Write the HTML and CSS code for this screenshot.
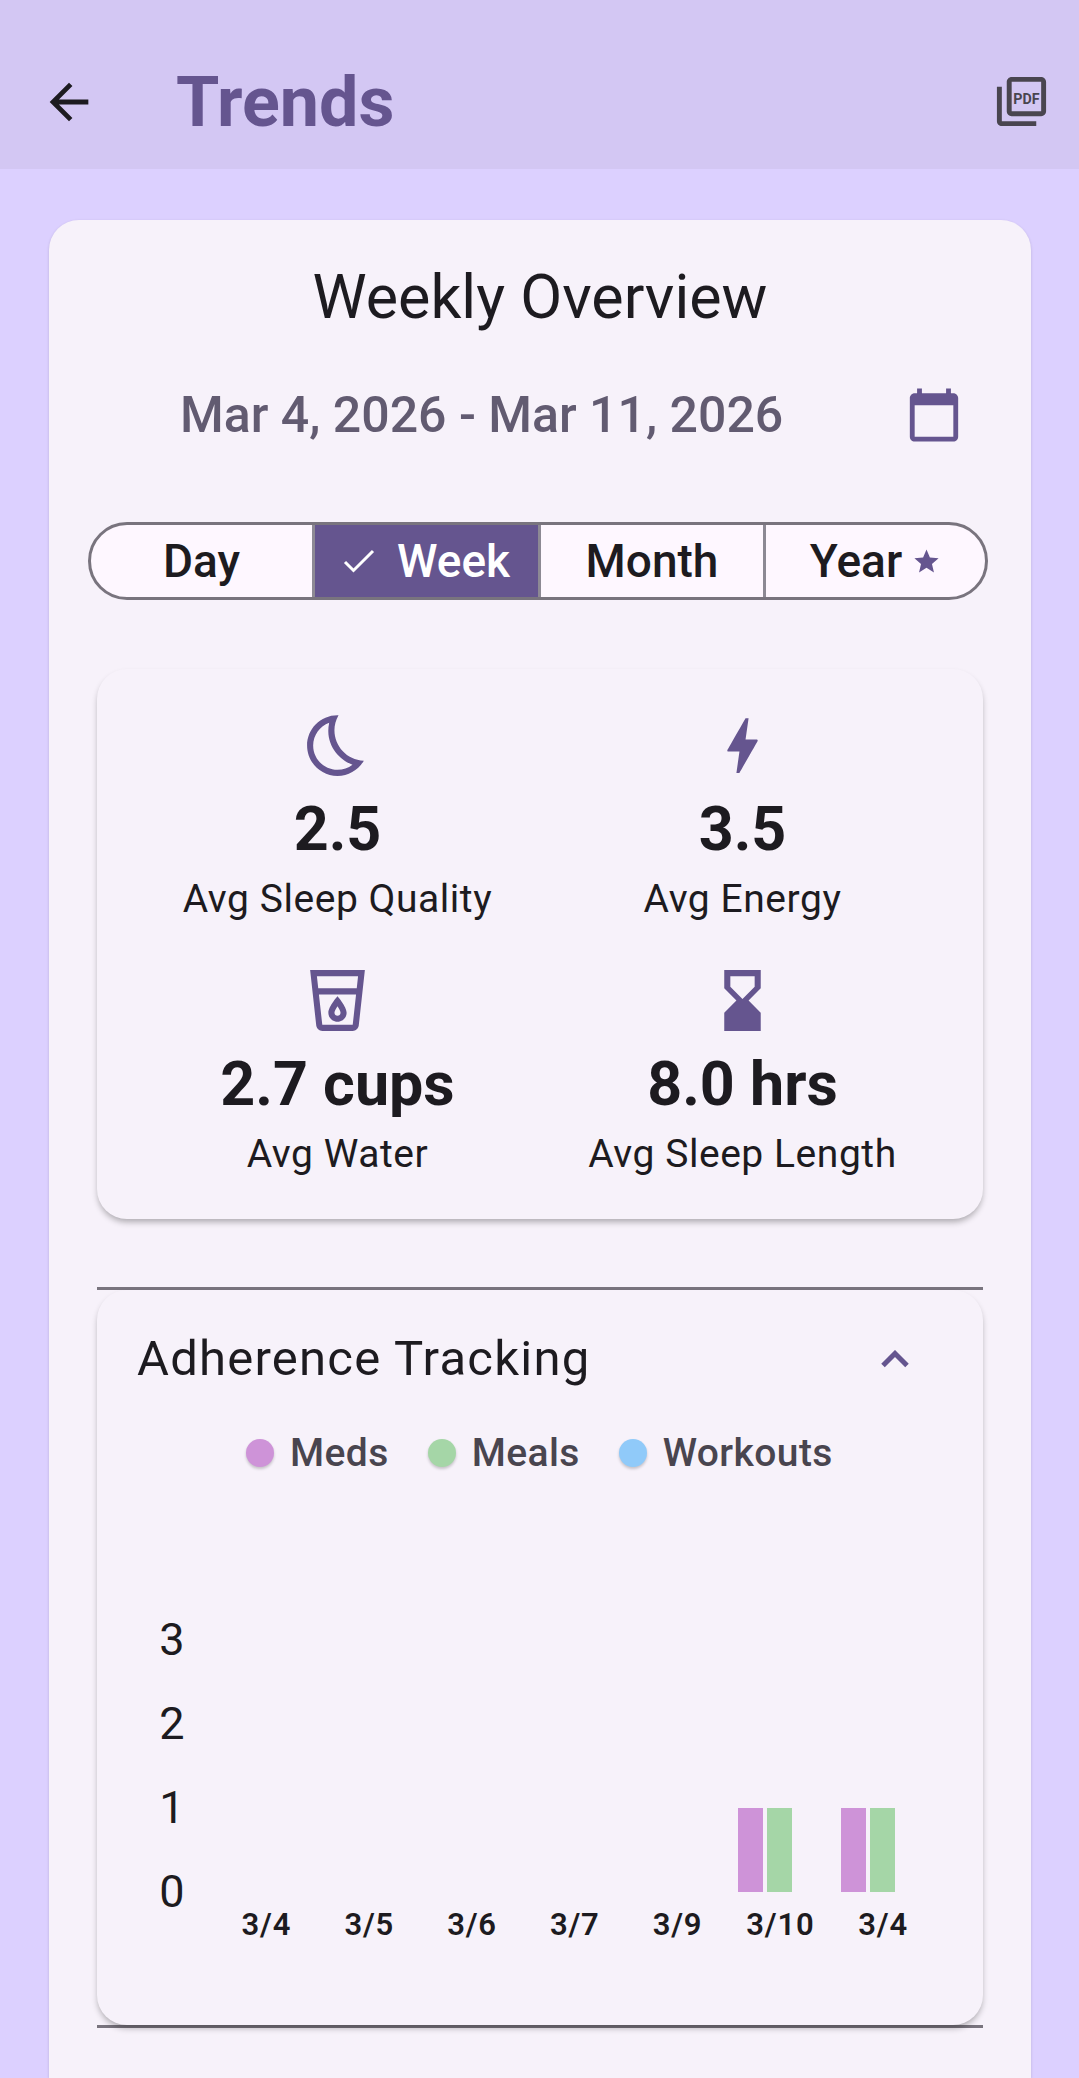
FILE: index.html
```html
<!DOCTYPE html>
<html lang="en">
<head>
  <meta charset="UTF-8" />
  <meta name="viewport" content="width=device-width, initial-scale=1.0" />
  <title>Trends</title>
  <link rel="stylesheet" href="styles.css">
</head>
<body>
  <header class="appbar">
    <svg class="icon-back" viewBox="0 0 24 24"><path d="M20 11H7.83l5.59-5.59L12 4l-8 8 8 8 1.41-1.41L7.83 13H20v-2z"/></svg>
    <h1>Trends</h1>
    <svg class="icon-pdf" viewBox="0 0 24 24">
      <path d="M20 2H8c-1.1 0-2 .9-2 2v12c0 1.1.9 2 2 2h12c1.1 0 2-.9 2-2V4c0-1.1-.9-2-2-2zm0 14H8V4h12v12zM4 6H2v14c0 1.1.9 2 2 2h14v-2H4V6z"/>
      <text class="pdf-label" x="14" y="13" text-anchor="middle">PDF</text>
    </svg>
  </header>

  <main class="page">
    <section class="card">
      <h2 class="card-title">Weekly Overview</h2>

      <div class="dates">
        <span>Mar 4, 2026 - Mar 11, 2026</span>
        <svg class="icon-calendar" viewBox="0 0 24 24"><path d="M20 3h-1V1h-2v2H7V1H5v2H4c-1.1 0-2 .9-2 2v16c0 1.1.9 2 2 2h16c1.1 0 2-.9 2-2V5c0-1.1-.9-2-2-2zm0 18H4V8h16v13z"/></svg>
      </div>

      <div class="segments">
        <button>Day</button>
        <button class="active">
          <svg class="icon-check" viewBox="0 0 32 24"><polyline points="2,13 10.5,21.5 30,2"/></svg>
          Week
        </button>
        <button>Month</button>
        <button>Year
          <svg class="icon-star" viewBox="0 0 24 24"><path d="M12 17.27L18.18 21l-1.64-7.03L22 9.24l-7.19-.61L12 2 9.19 8.63 2 9.24l5.46 4.73L5.82 21z"/></svg>
        </button>
      </div>

      <div class="stats">
        <div class="stat">
          <svg class="stat-icon" viewBox="0 0 24 24"><path d="M12.34 2.02C6.59 1.82 2 6.42 2 12c0 5.52 4.48 10 10 10 3.71 0 6.93-2.02 8.66-5.02-7.51-.25-12.09-8.43-8.32-14.96zM9.27 4.49c-1.63 7.54 3.75 12.41 7.66 13.8C15.54 19.38 13.81 20 12 20c-4.41 0-8-3.59-8-8 0-3.45 2.2-6.4 5.27-7.51z" fill-rule="evenodd"/></svg>
          <div class="stat-value">2.5</div>
          <div class="stat-label">Avg Sleep Quality</div>
        </div>
        <div class="stat">
          <svg class="stat-icon" viewBox="0 0 24 24"><path d="M11 21h-1l1-7H7.5c-.58 0-.57-.32-.38-.66.19-.34.05-.08.07-.12C8.48 10.94 10.42 7.54 13 3h1l-1 7h3.5c.49 0 .56.33.47.51l-.07.15C12.96 17.55 11 21 11 21z"/></svg>
          <div class="stat-value">3.5</div>
          <div class="stat-label">Avg Energy</div>
        </div>
        <div class="stat">
          <svg class="stat-icon" viewBox="0 0 24 24"><path d="M3 2l2.01 18.23C5.13 21.23 5.97 22 7 22h10c1.03 0 1.87-.77 1.99-1.77L21 2H3zm14 18l-10 .01L5.89 10H18.1L17 20zm1.33-12H5.67l-.44-4h13.53l-.43 4zM12 19c1.66 0 3-1.34 3-3 0-2-3-5.4-3-5.4S9 14 9 16c0 1.66 1.34 3 3 3zm0-5.09c.59.91 1 1.73 1 2.09 0 .55-.45 1-1 1s-1-.45-1-1c0-.36.41-1.18 1-2.09z"/></svg>
          <div class="stat-value">2.7 cups</div>
          <div class="stat-label">Avg Water</div>
        </div>
        <div class="stat">
          <svg class="stat-icon" viewBox="0 0 24 24"><path d="M18 22l-.01-6L14 12l3.99-4.01L18 2H6v6l4 4-4 3.99V22h12zM8 7.5V4h8v3.5l-4 4-4-4z"/></svg>
          <div class="stat-value">8.0 hrs</div>
          <div class="stat-label">Avg Sleep Length</div>
        </div>
      </div>

      <div class="tracking-wrap">
        <div class="tracking">
          <div class="tracking-head">
            <span>Adherence Tracking</span>
            <svg class="icon-chevron" viewBox="0 0 30 18"><polyline points="3,15.5 15,3.5 27,15.5"/></svg>
          </div>

          <div class="legend">
            <span class="legend-item"><i class="dot meds"></i>Meds</span>
            <span class="legend-item"><i class="dot meals"></i>Meals</span>
            <span class="legend-item"><i class="dot workouts"></i>Workouts</span>
          </div>

          <div class="chart">
            <div class="y-axis">
              <span>3</span>
              <span>2</span>
              <span>1</span>
              <span>0</span>
            </div>
            <div class="plot">
              <div class="day"><div class="bars"></div><span>3/4</span></div>
              <div class="day"><div class="bars"></div><span>3/5</span></div>
              <div class="day"><div class="bars"></div><span>3/6</span></div>
              <div class="day"><div class="bars"></div><span>3/7</span></div>
              <div class="day"><div class="bars"></div><span>3/9</span></div>
              <div class="day"><div class="bars"><i class="bar meds"></i><i class="bar meals"></i></div><span>3/10</span></div>
              <div class="day"><div class="bars"><i class="bar meds"></i><i class="bar meals"></i></div><span>3/4</span></div>
            </div>
          </div>
        </div>
      </div>
    </section>
  </main>
</body>
</html>
```

FILE: styles.css
```css
html, body {
  height: 2078px;
  margin: 0;
  overflow: hidden;
}

body {
  font-family: Roboto, sans-serif;
  background-color: #dcd0ff;
  color: #1d1b20;
  display: flex;
  flex-direction: column;
}

svg {
  display: block;
  fill: currentColor;
  flex-shrink: 0;
}

/* top bar */
.appbar {
  height: 169px;
  flex-shrink: 0;
  background-color: #d3c7f3;
  display: flex;
  align-items: center;
  padding: 34px 28px 0 40px;
  box-sizing: border-box;
}

.appbar h1 {
  flex: 1;
  margin: 0 0 0 78px;
  font-size: 70px;
  font-weight: 700;
  line-height: 74px;
  color: #65558f;
}

.icon-back {
  width: 58px;
  height: 58px;
  color: #1d1b20;
}

.icon-pdf {
  width: 59px;
  height: 59px;
  color: #49454f;
}

.pdf-label {
  font-family: Roboto, sans-serif;
  font-size: 5.8px;
  font-weight: 700;
}

/* outer card */
.page {
  flex: 1;
  padding: 51px 48px 0 49px;
  display: flex;
}

.card {
  flex: 1;
  background-color: #f7f2fa;
  border-radius: 30px 30px 0 0;
  box-shadow: 0 1px 3px rgba(0, 0, 0, 0.15);
  padding: 43px 48px 0;
}

.card-title {
  margin: 0;
  text-align: center;
  font-size: 61px;
  font-weight: 400;
  line-height: 68px;
}

.dates {
  display: flex;
  align-items: center;
  justify-content: space-between;
  margin-top: 55px;
  padding: 0 20px 0 83px;
  font-size: 50px;
  font-weight: 500;
  color: #625b71;
}

.icon-calendar {
  width: 58px;
  height: 58px;
  color: #65558f;
}

/* day / week / month / year switch */
.segments {
  display: grid;
  grid-template-columns: 221px 226px 225px 1fr;
  height: 78px;
  margin: 78px -5px 0 -9px;
  box-sizing: border-box;
  border: 3px solid #79747e;
  border-radius: 39px;
  overflow: hidden;
  background-color: #fef7ff;
}

.segments button {
  display: flex;
  align-items: center;
  justify-content: center;
  gap: 22px;
  border: none;
  border-left: 3px solid #8d8994;
  padding: 0;
  background: none;
  color: #1d1b20;
  font-family: Roboto, sans-serif;
  font-size: 46px;
  font-weight: 500;
}

.segments button:first-child {
  border-left: none;
}

.segments button.active {
  background-color: #65558f;
  color: #fff;
}

.icon-check {
  width: 32px;
  height: 24px;
  fill: none;
  stroke: #fff;
  stroke-width: 3;
}

.icon-star {
  width: 29px;
  height: 29px;
  margin-left: -12px;
  color: #65558f;
}

/* averages */
.stats {
  display: grid;
  grid-template-columns: 1fr 1fr;
  row-gap: 42px;
  margin-top: 69px;
  padding: 40px 38px 42px;
  background-color: #f7f2fa;
  border-radius: 30px;
  box-shadow: 0 4px 6px -1px rgba(0, 0, 0, 0.3);
}

.stat {
  display: flex;
  flex-direction: column;
  align-items: center;
}

.stat-icon {
  width: 73px;
  height: 73px;
  color: #65558f;
}

.stat-value {
  font-size: 61px;
  font-weight: 700;
  line-height: 94px;
}

.stat-label {
  font-size: 39px;
  line-height: 46px;
  letter-spacing: 0.55px;
}

/* adherence chart */
.tracking-wrap {
  margin-top: 68px;
  border-top: 3px solid #79747e;
  border-bottom: 3px solid #79747e;
}

.tracking {
  height: 735px;
  box-sizing: border-box;
  padding: 34px 0 0 40px;
  background-color: #f7f2fa;
  border-radius: 30px;
  box-shadow: 0 4px 6px -1px rgba(0, 0, 0, 0.3);
}

.tracking-head {
  display: flex;
  align-items: center;
  justify-content: space-between;
  padding-right: 73px;
  font-size: 49px;
  line-height: 70px;
  letter-spacing: 1.23px;
}

.icon-chevron {
  width: 30px;
  height: 18px;
  fill: none;
  stroke: #65558f;
  stroke-width: 5;
}

.legend {
  display: flex;
  gap: 39px;
  align-items: center;
  margin-top: 36px;
  padding-left: 109px;
  font-size: 39px;
  font-weight: 500;
  line-height: 46px;
  letter-spacing: 0.4px;
  color: #49454f;
}

.legend-item {
  display: flex;
  align-items: center;
  gap: 16px;
}

.dot {
  width: 28px;
  height: 28px;
  border-radius: 50%;
  box-shadow: 0 2px 3px rgba(0, 0, 0, 0.2);
}

.meds {
  background-color: #ce93d8;
}

.meals {
  background-color: #a5d6a7;
}

.workouts {
  background-color: #90caf9;
}

.chart {
  display: flex;
  align-items: flex-start;
  margin-top: 122px;
}

.y-axis {
  display: flex;
  flex-direction: column;
  width: 70px;
  text-align: center;
  font-size: 45px;
}

.y-axis span {
  height: 84px;
  line-height: 84px;
}

.plot {
  display: grid;
  grid-template-columns: repeat(7, 102.8px);
  height: 345px;
  margin-left: 8px;
}

.day {
  display: flex;
  flex-direction: column;
  align-items: center;
  justify-content: flex-end;
  font-size: 31px;
  font-weight: 600;
  letter-spacing: 0.8px;
  line-height: 36px;
}

.bars {
  display: flex;
  align-items: flex-end;
  justify-content: center;
  gap: 4px;
  height: 84px;
  margin: 0 30px 15px 0;
}

.bar {
  width: 25px;
  height: 84px;
}
```
